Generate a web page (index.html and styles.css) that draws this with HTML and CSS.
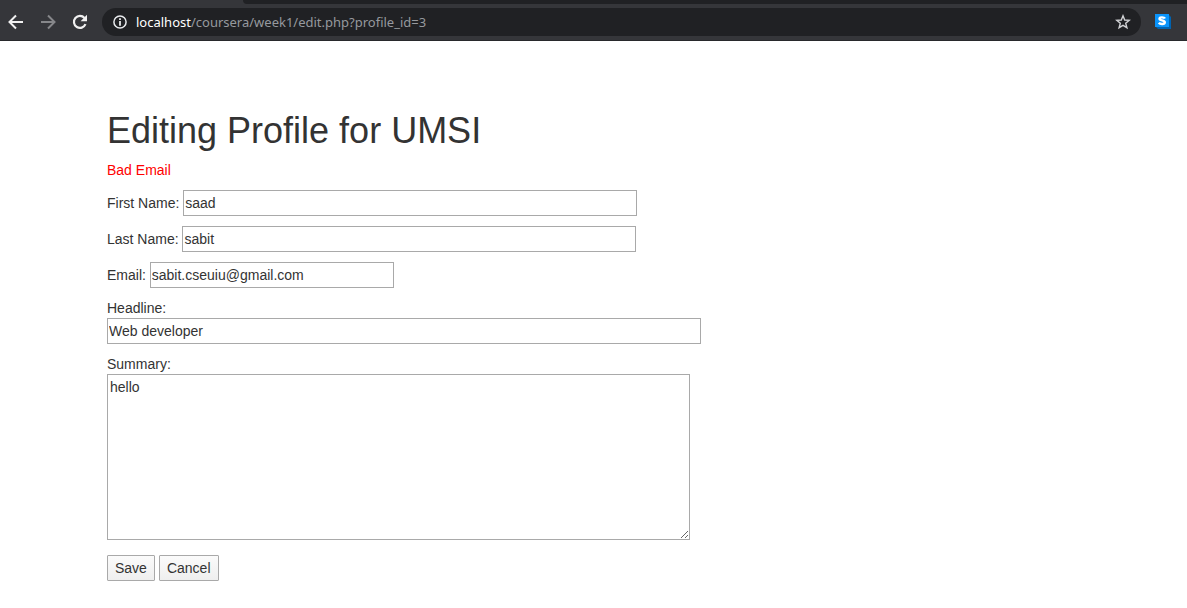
FILE: index.html
```html
<!DOCTYPE html>
<html lang="en">
<head>
<meta charset="utf-8">
<title>Editing Profile</title>
<link rel="stylesheet" href="styles.css">
</head>
<body>
<header class="browser">
  <div class="tabstrip"><div class="tab"></div><div class="tabs-rest"></div></div>
  <div class="toolbar">
    <button class="nav" type="button" aria-label="Back"><svg width="16" height="16" viewBox="0 0 16 16" fill="none" stroke="#f1f1f1" stroke-width="2"><path d="M15 8H2.5M8 1.5 1.5 8 8 14.5"/></svg></button>
    <button class="nav" type="button" aria-label="Forward"><svg width="16" height="16" viewBox="0 0 16 16" fill="none" stroke="#86878a" stroke-width="2"><path d="M1 8h12.5M8 1.5 14.5 8 8 14.5"/></svg></button>
    <button class="nav" type="button" aria-label="Reload"><svg width="16" height="16" viewBox="0 0 16 16"><path d="M13.5 10.2A6 6 0 1 1 12.500 4" fill="none" stroke="#f1f1f1" stroke-width="2.2"/><path d="M15 .8v6.400H8.600z" fill="#f1f1f1"/></svg></button>
    <div class="address">
      <svg width="14" height="14" viewBox="0 0 14 14"><circle cx="7" cy="7" r="6.1" fill="none" stroke="#e8eaed" stroke-width="1.5"/><path d="M6.1 3.2h1.800v1.700H6.100zM6.100 6h1.800v4.800H6.100z" fill="#e8eaed"/></svg>
      <span class="url"><span class="host">localhost</span>/coursera/week1/edit.php?profile_id=3</span>
      <button class="star" type="button" aria-label="Bookmark"><svg width="16" height="16" viewBox="0 0 16 16" fill="none" stroke="#d0d1d4" stroke-width="1.4"><path d="M8 1.800 9.700 6l4.500.3-3.500 2.900 1.200 4.500L8 11.300l-3.900 2.400 1.200-4.500L1.800 6.300 6.300 6z"/></svg></button>
    </div>
    <button class="extension" type="button" aria-label="Extension"><svg width="16" height="16" viewBox="0 0 16 16"><path d="M1 13 3 15h13V3l-2-2z" fill="#0063b1"/><path d="M0 0h14v13H0z" fill="#0a94fb"/><path d="M10 4.500C9.300 3.300 4.500 2.700 4.500 4.800c0 2.100 5.300 1.200 5.300 3.500 0 2.300-4.800 2.100-6 .5" fill="none" stroke="#fff" stroke-width="2.400"/></svg></button>
  </div>
</header>
<main class="page">
  <h1 class="title">Editing Profile for UMSI</h1>
  <p class="error">Bad Email</p>
  <form class="form">
    <div class="row"><label for="first">First Name:</label> <input class="field name" id="first" type="text" value="saad"></div>
    <div class="row"><label for="last">Last Name:</label> <input class="field name" id="last" type="text" value="sabit"></div>
    <div class="row"><label for="email">Email:</label> <input class="field email" id="email" type="text" value="sabit.cseuiu@gmail.com"></div>
    <div class="stack"><label for="headline">Headline:</label><input class="field headline" id="headline" type="text" value="Web developer"></div>
    <div class="stack"><label for="summary">Summary:</label><textarea class="field summary" id="summary" rows="8">hello</textarea></div>
    <div class="actions"><button class="btn" type="button">Save</button><button class="btn" type="button">Cancel</button></div>
  </form>
</main>
</body>
</html>
```
FILE: styles.css
```css
* { box-sizing: border-box; }
body {
  margin: 0;
  background: #fff;
  color: #333;
  font: 14px/20px "Liberation Sans", Arial, sans-serif;
}
.browser { background: #35363a; border-bottom: 1px solid #28292c; }
.tabstrip { display: flex; height: 4px; }
.tab { width: 243px; }
.tabs-rest { flex: 1; background: #202124; border-bottom-left-radius: 4px; }
.toolbar { display: flex; align-items: center; height: 36px; padding: 0 16px 0 0; }
.nav, .star, .extension {
  display: flex;
  align-items: center;
  justify-content: center;
  padding: 0;
  border: 0;
  background: none;
}
.nav { width: 32px; height: 32px; }
.address {
  display: flex;
  flex: 1;
  align-items: center;
  gap: 9px;
  height: 28px;
  margin-left: 6px;
  padding: 0 10px 0 11px;
  border-radius: 14px;
  background: #202124;
}
.url { flex: 1; color: #96999e; font: 13px/20px "Noto Sans", "Open Sans", sans-serif; }
.host { color: #fff; }
.extension { margin-left: 14px; }
.page { padding: 70px 107px 27px; }
.title { margin: 0 0 10px; font-size: 36px; font-weight: 500; line-height: 39px; }
.error { margin: 0 0 10px; color: #f00; }
.form { display: flex; flex-direction: column; gap: 10px; }
.row { height: 26px; line-height: 26px; }
.stack { display: flex; flex-direction: column; align-items: flex-start; }
.field {
  height: 26px;
  max-width: 100%;
  margin: 0;
  padding: 1px;
  border: 1px solid #a9a9a9;
  border-radius: 0;
  background: #fff;
  color: #333;
  font: inherit;
  line-height: 20px;
  vertical-align: top;
}
.name { width: 454px; }
.email { width: 244px; }
.headline { width: 594px; }
.summary { width: 583px; height: 166px; padding: 2px; }
.actions { display: flex; gap: 4px; padding-top: 5px; }
.btn {
  height: 26px;
  padding: 0 7px;
  border: 1px solid #a9a9a9;
  border-radius: 1px;
  background: linear-gradient(#fbfbfb, #efefef);
  color: #333;
  font: inherit;
}
```
